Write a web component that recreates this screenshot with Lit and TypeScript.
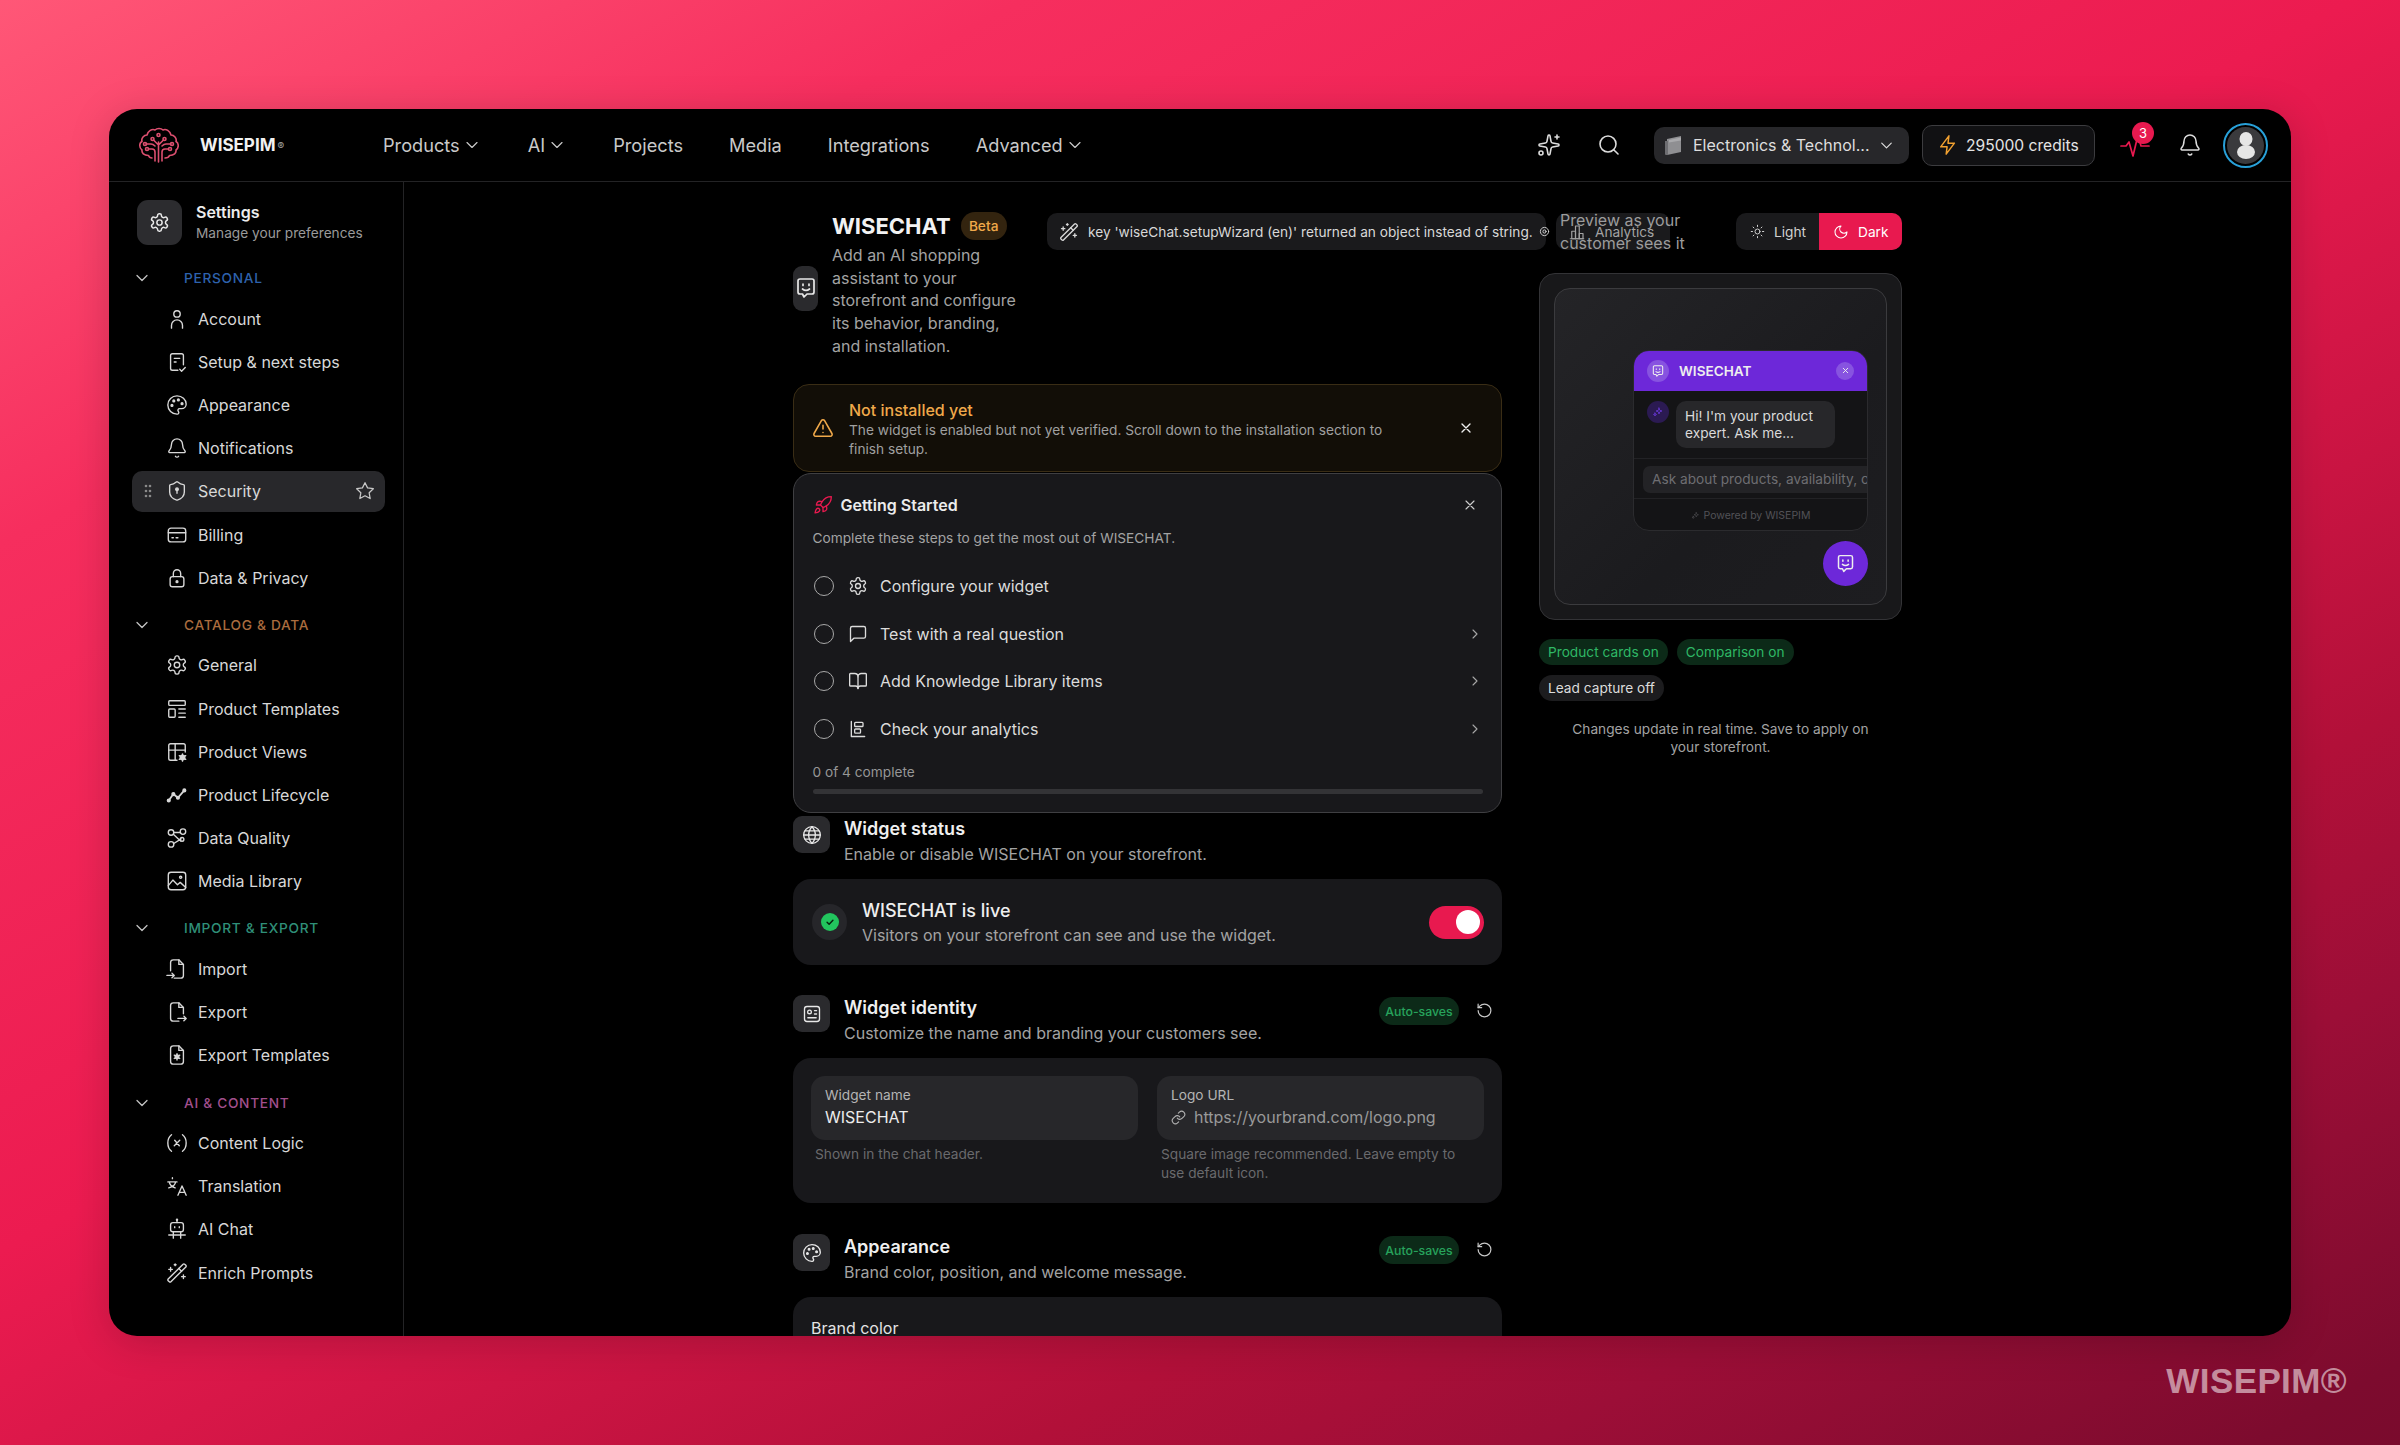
import { LitElement, html, css } from "lit";
import { customElement } from "lit/decorators.js";
import { unsafeSVG } from "lit/directives/unsafe-svg.js";

const SMILE = `<path d="M4 5a2 2 0 0 1 2-2h12a2 2 0 0 1 2 2v11a2 2 0 0 1-2 2h-5l-3 3-1.5-3H6a2 2 0 0 1-2-2z"/><path d="M9 8v1.5M15 8v1.5M8.5 13c2 1.6 5 1.6 7 0"/>`;
const I: Record<string, string> = {
  settings: `<path d="M12.22 2h-.44a2 2 0 0 0-2 2v.18a2 2 0 0 1-1 1.73l-.43.25a2 2 0 0 1-2 0l-.15-.08a2 2 0 0 0-2.73.73l-.22.38a2 2 0 0 0 .73 2.73l.15.1a2 2 0 0 1 1 1.72v.51a2 2 0 0 1-1 1.74l-.15.09a2 2 0 0 0-.73 2.73l.22.38a2 2 0 0 0 2.73.73l.15-.08a2 2 0 0 1 2 0l.43.25a2 2 0 0 1 1 1.73V20a2 2 0 0 0 2 2h.44a2 2 0 0 0 2-2v-.18a2 2 0 0 1 1-1.73l.43-.25a2 2 0 0 1 2 0l.15.08a2 2 0 0 0 2.73-.73l.22-.39a2 2 0 0 0-.73-2.73l-.15-.08a2 2 0 0 1-1-1.74v-.5a2 2 0 0 1 1-1.74l.15-.09a2 2 0 0 0 .73-2.73l-.22-.38a2 2 0 0 0-2.73-.73l-.15.08a2 2 0 0 1-2 0l-.43-.25a2 2 0 0 1-1-1.73V4a2 2 0 0 0-2-2z"/><circle cx="12" cy="12" r="3"/>`,
  user: `<circle cx="12" cy="6.5" r="3.5"/><path d="M6 22v-3a6 6 0 0 1 12 0v3"/>`,
  setup: `<path d="M13 21H7a2 2 0 0 1-2-2V5a2 2 0 0 1 2-2h10a2 2 0 0 1 2 2v10"/><path d="M9 8h6M9 12h2M15 20l2 2 4-4"/>`,
  palette: `<path d="M12 22a1 1 0 0 1 0-20 10 9 0 0 1 10 9 5 5 0 0 1-5 5h-2.25a1.75 1.75 0 0 0-1.4 2.8l.3.4a1.75 1.75 0 0 1-1.4 2.8z"/><circle cx="13.5" cy="6.5" r="1" fill="currentColor"/><circle cx="17.5" cy="10.5" r="1" fill="currentColor"/><circle cx="6.5" cy="12.5" r="1" fill="currentColor"/><circle cx="8.5" cy="7.5" r="1" fill="currentColor"/>`,
  bell: `<path d="M10.268 21a2 2 0 0 0 3.464 0"/><path d="M3.262 15.326A1 1 0 0 0 4 17h16a1 1 0 0 0 .74-1.673C19.41 13.956 18 12.499 18 8A6 6 0 0 0 6 8c0 4.499-1.411 5.956-2.738 7.326"/>`,
  shield: `<path d="M20 13c0 5-3.5 7.5-7.66 8.95a1 1 0 0 1-.67-.01C7.5 20.5 4 18 4 13V6a1 1 0 0 1 1-1c2 0 4.5-1.2 6.24-2.72a1.17 1.17 0 0 1 1.52 0C14.51 3.81 17 5 19 5a1 1 0 0 1 1 1z"/><circle cx="12" cy="10" r="1.4" fill="currentColor"/><path d="M12 11v3.5"/>`,
  star: `<path d="M12 2l3.09 6.26L22 9.27l-5 4.87 1.18 6.88L12 17.77l-6.18 3.25L7 14.14 2 9.27l6.91-1.01z"/>`,
  billing: `<rect x="2.5" y="4.5" width="19" height="15" rx="3"/><path d="M2.5 9.5h19M6.5 15h1.5M11 15h2"/>`,
  lock: `<rect x="4.5" y="10.5" width="15" height="11" rx="2.5"/><path d="M8 10.5V7a4 4 0 0 1 8 0v3.5"/><circle cx="12" cy="16" r="1" fill="currentColor"/>`,
  template: `<rect x="3" y="3" width="18" height="5" rx="1"/><rect x="3" y="12" width="7" height="9" rx="1"/><path d="M14 12h7M14 16.5h7M14 21h7"/>`,
  views: `<path d="M12 21H5a2 2 0 0 1-2-2V5a2 2 0 0 1 2-2h14a2 2 0 0 1 2 2v7"/><path d="M3 10h18M10 3v18"/><circle cx="18" cy="18" r="2.5" fill="currentColor"/><path d="M18 14v1.5M18 20.500v1.500M14.500 16l1.300.8M20.200 19.200l1.300.8M14.500 20l1.300-.8M20.200 16.800l1.300-.8"/>`,
  life: `<path d="M3 18l5-7 5 4 7-8" stroke-width="2"/><circle cx="3" cy="18" r="1.500" fill="currentColor"/><circle cx="8" cy="11" r="1.500" fill="currentColor"/><circle cx="13" cy="15" r="1.500" fill="currentColor"/><circle cx="20" cy="7" r="1.500" fill="currentColor"/>`,
  quality: `<circle cx="5.500" cy="6" r="3"/><circle cx="18.500" cy="5" r="3"/><circle cx="5.500" cy="19" r="3"/><path d="M8 8l7 6.500a2 2 0 0 1 1 .5M8.500 18l8-5M8.500 6h7"/><circle cx="17.500" cy="13.500" r="2"/>`,
  image: `<rect x="2.500" y="2.500" width="19" height="19" rx="3"/><path d="M2.500 17l5-6 5 5 3-2.500 6 5.500"/><circle cx="16" cy="8" r="1.200"/>`,
  import: `<path d="M14 2v5h5"/><path d="M5 14V5a3 3 0 0 1 3-3h6l5 5v12a3 3 0 0 1-3 3H9"/><path d="M1 19h8M6.500 16.500L9 19l-2.500 2.500"/>`,
  export: `<path d="M14 2v5h5"/><path d="M14 22H8a3 3 0 0 1-3-3V5a3 3 0 0 1 3-3h6l5 5v7"/><path d="M13 19h9M19.500 16.500L22 19l-2.500 2.500"/>`,
  exportt: `<path d="M14 2v5h5"/><path d="M16 22H8a3 3 0 0 1-3-3V5a3 3 0 0 1 3-3h6l5 5v12a3 3 0 0 1-3 3z"/><circle cx="12" cy="14" r="2" fill="currentColor"/><path d="M12 10.500v7M9 12.200l6 3.600M9 15.800l6-3.600"/>`,
  variable: `<path d="M6 21s-4-3-4-9 4-9 4-9"/><path d="M18 3s4 3 4 9-4 9-4 9"/><path d="M15 9l-6 6M9.500 9l5 6"/>`,
  translate: `<path d="M2 7.500h10M7 3v1M3.500 7.500c.5 3 3 5.500 6.500 6.500M10.500 7.500c-.5 3-3 5.500-7.500 6.500"/><path d="M22 22l-4.500-10L13 22M14.500 19h6"/>`,
  robot: `<rect x="5" y="5" width="14" height="10" rx="2.500"/><path d="M12 5V2.500M9.500 9.500v1M14.500 9.500v1M3 18.500h18M8 15v7M16 15v7"/><circle cx="12" cy="2" r=".6"/>`,
  wand: `<path d="m21.640 3.640-1.280-1.280a1.210 1.210 0 0 0-1.720 0L2.360 18.640a1.210 1.210 0 0 0 0 1.720l1.280 1.280a1.200 1.200 0 0 0 1.720 0L21.640 5.360a1.200 1.200 0 0 0 0-1.720"/><path d="m14 7 3 3M5 6v4M19 14v4M10 2v2M7 8H3M21 16h-4M11 3H9"/>`,
  chevDown: `<path d="m6 9 6 6 6-6"/>`,
  chevRight: `<path d="m9 6 6 6-6 6"/>`,
  sparkle: `<path d="M11.017 2.814a1 1 0 0 1 1.966 0l1.051 5.558a2 2 0 0 0 1.594 1.594l5.558 1.051a1 1 0 0 1 0 1.966l-5.558 1.051a2 2 0 0 0-1.594 1.594l-1.051 5.558a1 1 0 0 1-1.966 0l-1.051-5.558a2 2 0 0 0-1.594-1.594l-5.558-1.051a1 1 0 0 1 0-1.966l5.558-1.051a2 2 0 0 0 1.594-1.594z"/><path d="M20 2v4M22 4h-4"/><circle cx="4" cy="20" r="2"/>`,
  search: `<circle cx="11" cy="11" r="8"/><path d="m21 21-4.300-4.300"/>`,
  zap: `<path d="M13 2L4 14h7l-1 8 9-12h-7z"/>`,
  smile: SMILE,
  x: `<path d="M18 6 6 18M6 6l12 12"/>`,
  alert: `<path d="m21.730 18-8-14a2 2 0 0 0-3.480 0l-8 14A2 2 0 0 0 4 21h16a2 2 0 0 0 1.730-3"/><path d="M12 9v4M12 17h.01"/>`,
  rocket: `<path d="M4.500 16.500c-1.500 1.260-2 5-2 5s3.740-.5 5-2c.71-.84.7-2.130-.09-2.910a2.180 2.180 0 0 0-2.910-.09z"/><path d="m12 15-3-3a22 22 0 0 1 2-3.950A12.880 12.880 0 0 1 22 2c0 2.720-.78 7.500-6 11a22.350 22.350 0 0 1-4 2z"/><path d="M9 12H4s.55-3.030 2-4c1.620-1.080 5 0 5 0M12 15v5s3.030-.55 4-2c1.080-1.620 0-5 0-5"/>`,
  msg: `<path d="M21 15a2 2 0 0 1-2 2H7l-4 4V5a2 2 0 0 1 2-2h14a2 2 0 0 1 2 2z"/>`,
  book: `<path d="M12 7v14"/><path d="M3 18a1 1 0 0 1-1-1V4a1 1 0 0 1 1-1h5a4 4 0 0 1 4 4 4 4 0 0 1 4-4h5a1 1 0 0 1 1 1v13a1 1 0 0 1-1 1h-6a3 3 0 0 0-3 3 3 3 0 0 0-3-3z"/>`,
  chart: `<path d="M4 3v18h16"/><rect x="8" y="4" width="10" height="5" rx="1"/><rect x="8" y="12" width="7" height="5" rx="1"/>`,
  globe: `<circle cx="12" cy="12" r="10"/><path d="M12 2a14.500 14.500 0 0 0 0 20 14.500 14.500 0 0 0 0-20M2 12h20M3.500 7h17M3.500 17h17"/>`,
  idcard: `<rect x="3" y="3" width="18" height="18" rx="3"/><circle cx="9" cy="9.500" r="2.200"/><path d="M15 8h2.500M15 12h2.500M7 16.500h10"/>`,
  reset: `<path d="M3 12a9 9 0 1 0 9-9 9.750 9.750 0 0 0-6.740 2.740L3 8"/><path d="M3 3v5h5"/>`,
  link: `<path d="M10 13a5 5 0 0 0 7.540.54l3-3a5 5 0 0 0-7.070-7.070l-1.720 1.710"/><path d="M14 11a5 5 0 0 0-7.540-.54l-3 3a5 5 0 0 0 7.070 7.070l1.710-1.710"/>`,
  sun: `<circle cx="12" cy="12" r="4"/><path d="M12 2v2M12 20v2M4.900 4.900l1.400 1.400M17.700 17.700l1.400 1.400M2 12h2M20 12h2M6.300 17.700l-1.400 1.400M19.100 4.900l-1.400 1.400"/>`,
  moon: `<path d="M12 3a6 6 0 0 0 9 9 9 9 0 1 1-9-9Z"/>`,
  bars: `<path d="M3 21h18"/><rect x="5" y="11" width="5" height="10"/><rect x="10" y="4" width="5" height="17"/><rect x="15" y="14" width="5" height="7"/>`,
  target: `<circle cx="12" cy="12" r="9"/><circle cx="12" cy="12" r="3.500"/>`,
  check: `<path d="M7 12.500l3.500 3.500L17 9"/>`,
  spark4: `<path d="M14 4l1.500 4.500L20 10l-4.500 1.500L14 16l-1.500-4.500L8 10l4.500-1.500zM6 14l.8 2.200L9 17l-2.200.8L6 20l-.8-2.200L3 17l2.200-.8z"/>`,
};

function ic(name: string, size = 20, w = 1.6, cls = "") {
  return html`<svg class="ic ${cls}" width=${size} height=${size} viewBox="0 0 24 24" fill="none" stroke="currentColor" stroke-width=${w} stroke-linecap="round" stroke-linejoin="round">${unsafeSVG(I[name])}</svg>`;
}

const SECTIONS = [
  { label: "PERSONAL", cls: "blue", items: [["user", "Account"], ["setup", "Setup & next steps"], ["palette", "Appearance"], ["bell", "Notifications"], ["shield", "Security"], ["billing", "Billing"], ["lock", "Data & Privacy"]] },
  { label: "CATALOG & DATA", cls: "orange", items: [["settings", "General"], ["template", "Product Templates"], ["views", "Product Views"], ["life", "Product Lifecycle"], ["quality", "Data Quality"], ["image", "Media Library"]] },
  { label: "IMPORT & EXPORT", cls: "teal", items: [["import", "Import"], ["export", "Export"], ["exportt", "Export Templates"]] },
  { label: "AI & CONTENT", cls: "pink", items: [["variable", "Content Logic"], ["translate", "Translation"], ["robot", "AI Chat"], ["wand", "Enrich Prompts"]] },
];

const STEPS: [string, string, boolean][] = [
  ["settings", "Configure your widget", false],
  ["msg", "Test with a real question", true],
  ["book", "Add Knowledge Library items", true],
  ["chart", "Check your analytics", true],
];

@customElement("app-root")
export class AppRoot extends LitElement {
  static styles = css`
    :host {
      display: block; position: relative; box-sizing: border-box; width: 2400px; height: 1445px; padding: 109px;
      background: linear-gradient(152deg, #ff5777 0%, #f62e5e 20%, #ec1b50 46%, #c91442 63%, #b21039 73%, #9c0e37 83%, #7d0b2e 97%, #7a0b2d 100%);
      font-family: Inter, "Noto Sans", sans-serif; color: #e5e5e5; overflow: hidden;
    }
    * { box-sizing: border-box; }
    .ic { flex: none; display: block; }
    .window { height: 1227px; background: #000; border-radius: 28px; overflow: hidden; display: flex; flex-direction: column; box-shadow: 0 6px 40px rgba(0,0,0,.18); }
    .mark { position: absolute; right: 53px; bottom: 45px; font-family: "Liberation Sans", Arial, sans-serif; font-size: 35px; font-weight: 700; letter-spacing: .4px; color: rgba(255,255,255,.55); line-height: 38px; }

    header { flex: none; height: 73px; display: flex; align-items: center; padding: 0 23px 0 29px; border-bottom: 1px solid #232325; }
    .brand { width: 245px; display: flex; align-items: center; gap: 21px; }
    .brand svg { display: block; }
    .brand b { font-size: 17px; font-weight: 700; color: #f1f1f1; }
    .brand sup { font-size: 10px; color: #a8a8a8; font-weight: 400; margin-left: 2px; vertical-align: 1px; line-height: 0; }
    nav { display: flex; gap: 46px; font-size: 18.200px; color: #c9c9c9; }
    nav span { display: flex; align-items: center; gap: 2px; }
    .right { margin-left: auto; display: flex; align-items: center; color: #dcdcdc; }
    .sel { width: 255px; height: 37px; margin: 0 13px 0 33px; border-radius: 10px; background: #27272a; display: flex; align-items: center; padding: 0 13px 0 10px; font-size: 16px; color: #dedede; }
    .sel span { margin-left: 9px; flex: 1; white-space: nowrap; }
    .credits { width: 173px; height: 41px; border-radius: 10px; background: #111113; border: 1px solid #3c3c3f; display: flex; align-items: center; padding-left: 14px; gap: 7px; font-size: 15.600px; font-weight: 400; color: #e4e4e4; white-space: nowrap; }
    .pulse { position: relative; margin: 0 28px 0 25px; color: #e8194f; }
    .badge { position: absolute; left: 12px; top: -11px; width: 22px; height: 22px; border-radius: 50%; background: #e8194f; color: #fff; font-size: 13px; display: flex; align-items: center; justify-content: center; }
    .avatar { margin-left: 21px; width: 45px; height: 45px; border-radius: 50%; border: 2px solid #28a0d8; padding: 2px; }
    .avatar div { width: 100%; height: 100%; border-radius: 50%; background: #3a3a3d; display: flex; align-items: center; justify-content: center; }

    .body { flex: 1; min-height: 0; display: flex; }
    aside { flex: none; width: 295px; border-right: 1px solid #232325; padding: 18px 18px 0 23px; overflow: hidden; }
    .shead { display: flex; align-items: center; gap: 14px; margin: 0 0 16px 5px; }
    .sbox { width: 45px; height: 45px; border-radius: 11px; background: #2c2c2f; display: flex; align-items: center; justify-content: center; color: #e8e8e8; }
    .shead b { display: block; font-size: 16px; font-weight: 600; color: #ededed; line-height: 21px; margin-top: 1px; }
    .shead small { display: block; font-size: 13.700px; color: #9a9a9a; line-height: 21px; }
    .sec { margin-bottom: 9.500px; }
    .slabel { height: 34px; margin-bottom: 3px; display: flex; align-items: center; font-size: 13.700px; font-weight: 500; letter-spacing: .7px; color: #c4c4c4; }
    .slabel span { margin-left: 32px; }
    .blue span { color: #2e62ad; } .orange span { color: #aa6c3e; } .teal span { color: #2f8f78; } .pink span { color: #a24f8d; }
    .rows { display: flex; flex-direction: column; gap: 2px; }
    .row { height: 41.200px; border-radius: 10px; display: flex; align-items: center; gap: 10px; padding-left: 34px; font-size: 16px; color: #d8d8d8; position: relative; }
    .row.on { background: #28282b; }
    .row .grip { position: absolute; left: 10px; color: #8a8a8a; }
    .row .st { position: absolute; right: 10px; color: #c8c8c8; }

    main { flex: 1; min-width: 0; overflow: hidden; display: flex; justify-content: center; padding-top: 31px; }
    .grid { width: 1109px; display: grid; grid-template-columns: 709px 37px 363px; grid-template-rows: 37px auto; row-gap: 23px; align-items: start; }
    .tools { grid-column: 1 / -1; grid-row: 1; justify-self: end; display: flex; z-index: 1; }
    .pill { height: 37px; border-radius: 10px; background: #1a1a1c; display: flex; align-items: center; font-size: 13.700px; white-space: nowrap; color: #d8d8d8; }
    .key { width: 499px; padding-left: 12px; gap: 9px; }
    .key .ic:last-child { margin-left: -3px; }
    .ana { position: relative; width: 114px; margin: 0 66px 0 10px; padding-left: 12px; gap: 9px; color: #a3a3a3; }
    .prev { position: absolute; left: 4px; top: -4.500px; font-size: 16px; line-height: 23px; color: #9c9c9c; white-space: nowrap; }
    .theme { display: flex; height: 37px; border-radius: 10px; overflow: hidden; background: #1a1a1c; font-size: 13.700px; color: #d0d0d0; }
    .theme span { display: flex; align-items: center; gap: 9px; padding: 0 14px 0 14px; }
    .theme .lt { width: 83px; }
    .theme .dk { width: 83px; background: #e8194f; color: #fff; }

    .left { grid-column: 1; grid-row: 1 / span 2; margin-top: -2px; }
    .phead { display: flex; align-items: center; gap: 14px; }
    .pbox { width: 25px; height: 45px; border-radius: 9px; background: #2a2a2d; display: flex; align-items: center; justify-content: center; color: #e8e8e8; flex: none; margin-top: 8px; }
    .ptitle { display: flex; align-items: center; gap: 10px; height: 30px; margin-top: 0; }
    .ptitle b { font-size: 22px; font-weight: 700; color: #f2f2f2; }
    .ptitle span { height: 28px; width: 46px; border-radius: 14px; background: #33240f; color: #f0a94a; font-size: 13.700px; font-weight: 500; display: flex; align-items: center; justify-content: center; }
    .pdesc { width: 185px; font-size: 16px; line-height: 22.700px; color: #a3a3a3; margin-top: 3px; }

    .warn { margin-top: 26px; height: 88px; border-radius: 16px; border: 1px solid #3a2d15; background: #120e07; display: flex; align-items: center; padding: 0 0 0 18px; position: relative; }
    .warn .tri { color: #f0a94a; }
    .warn .txt { margin-left: 15px; width: 560px; padding-top: 2px; }
    .warn b { display: block; font-size: 16px; font-weight: 500; color: #f0a94a; line-height: 22px; }
    .warn p { margin: 0; font-size: 13.700px; line-height: 19px; color: #a0a0a0; }
    .warn .close { margin-left: auto; margin-right: 27px; color: #eee; }

    .gs { margin-top: 1px; height: 340px; border-radius: 18px; border: 1px solid #3f3f42; background: #18181b; padding: 19px 18px 0 18.500px; }
    .gs-h { display: flex; align-items: center; gap: 8px; height: 24px; font-size: 16px; font-weight: 600; color: #ececec; }
    .gs-h .rk { color: #e8194f; }
    .gs-h .close { margin-left: auto; color: #cfcfcf; margin-right: 5px; }
    .gs-d { margin-top: 11px; font-size: 13.700px; line-height: 20px; color: #a3a3a3; }
    .steps { margin-top: 15px; }
    .step { height: 47.500px; display: flex; align-items: center; font-size: 16px; color: #dcdcdc; }
    .radio { width: 20px; height: 20px; border-radius: 50%; border: 1.500px solid #a8a8a8; margin: 0 14.500px 0 1px; }
    .step .t { margin-left: 12px; flex: 1; }
    .step .chev { color: #a8a8a8; margin-right: 0; }
    .gs-c { margin-top: 9px; font-size: 13.700px; line-height: 20px; color: #969696; }
    .bar { margin-top: 7px; height: 5px; border-radius: 3px; background: #333336; }

    .sh { display: flex; align-items: flex-start; gap: 14px; }
    .sbx { width: 37px; height: 37px; border-radius: 9px; background: #2a2a2d; display: flex; align-items: center; justify-content: center; color: #e8e8e8; flex: none; }
    .sh-t { flex: 1; }
    .sh-t b { display: block; font-size: 18px; font-weight: 600; line-height: 27px; color: #efefef; margin-top: -1px; }
    .sh-t p { margin: 0; font-size: 16px; line-height: 24px; color: #a3a3a3; }
    .first { margin-top: 3.500px; }
    .card { margin-top: 13px; border-radius: 18px; background: #18181b; }
    .next { margin-top: 30px; }
    .next2 { margin-top: 31px; }
    .live { height: 86px; display: flex; align-items: center; padding: 0 18px 0 19px; }
    .dotw { width: 35px; height: 36px; border-radius: 50%; background: #26262a; display: flex; align-items: center; justify-content: center; }
    .dot { width: 18px; height: 18px; border-radius: 50%; background: #22c55e; color: #06240f; display: flex; align-items: center; justify-content: center; }
    .live-t { margin-left: 15px; flex: 1; padding-top: 1px; }
    .live-t b { display: block; font-size: 18px; font-weight: 500; line-height: 25px; color: #efefef; }
    .live-t p { margin: 0; font-size: 16px; line-height: 24px; color: #a3a3a3; }
    .tog { width: 55px; height: 33px; border-radius: 17px; background: #e8194f; display: flex; align-items: center; justify-content: flex-end; padding-right: 4px; }
    .tog i { width: 24px; height: 24px; border-radius: 50%; background: #fff; }
    .auto { height: 28px; width: 80px; border-radius: 14px; background: #0c2a18; color: #27a35c; font-size: 12.300px; font-weight: 500; display: flex; align-items: center; justify-content: center; margin-top: 2px; }
    .rst { margin: 7px 9px 0 3px; color: #c8c8c8; }
    .idc { height: 145px; padding: 18px 18px 0; display: grid; grid-template-columns: 1fr 1fr; column-gap: 19px; align-items: start; }
    .inp { height: 64px; border-radius: 14px; background: #27272a; padding: 10px 14px; }
    .inp label { display: block; font-size: 13.700px; line-height: 18px; color: #b4b4b4; }
    .inp div { display: flex; align-items: center; gap: 8px; font-size: 16px; line-height: 26px; color: #ececec; }
    .inp .ph { color: #999; }
    .inp .ph .ic { color: #b4b4b4; }
    .help { margin: 5px 4px 0; font-size: 13.700px; line-height: 19px; color: #6a6a6d; }
    .apc { height: 120px; padding: 19.500px 18px; font-size: 16px; line-height: 22px; color: #e4e4e4; }

    .rightc { grid-column: 3; grid-row: 2; }
    .pv { height: 347px; border-radius: 16px; border: 1px solid #333336; background: #18181a; padding: 14px; }
    .pvi { height: 100%; border-radius: 16px; border: 1px solid #3b3b3e; background: linear-gradient(135deg, #242427, #1b1b1e 60%, #1d1d20); padding: 61px 18px 0 0; display: flex; flex-direction: column; align-items: flex-end; }
    .chat { width: 235px; height: 181px; border-radius: 16px; border: 1px solid #2b2b2e; background: #141416; overflow: hidden; }
    .ch { height: 41px; margin: -1px -1px 0; background: #6d28d9; display: flex; align-items: center; padding: 0 14px; color: #eee; font-size: 13.600px; font-weight: 600; }
    .ch .c1 { width: 22px; height: 22px; border-radius: 50%; background: #8753e0; display: flex; align-items: center; justify-content: center; margin-right: 10px; }
    .ch .c2 { width: 18px; height: 18px; border-radius: 50%; background: #8753e0; display: flex; align-items: center; justify-content: center; margin-left: auto; }
    .cb { height: 68px; padding: 10px 13px 0; display: flex; gap: 7px; border-bottom: 1px solid #222225; }
    .cav { width: 22px; height: 22px; border-radius: 50%; background: #2b1a52; color: #6d3be0; display: flex; align-items: center; justify-content: center; flex: none; }
    .bub { width: 159px; height: 47px; border-radius: 10px; background: #27272a; padding: 7px 9px; font-size: 13.700px; line-height: 17px; color: #dadada; }
    .ci { height: 40px; padding: 7px 0 0 9px; border-bottom: 1px solid #222225; }
    .ci div { height: 27px; width: 240px; border-radius: 7px; background: #232326; padding-left: 9px; font-size: 13.700px; line-height: 27px; color: #6e6e72; white-space: nowrap; overflow: hidden; }
    .cf { display: flex; align-items: center; justify-content: center; gap: 4px; height: 32px; padding-top: 1px; font-size: 10.500px; color: #525256; white-space: nowrap; }
    .fab { margin-top: 10px; width: 45px; height: 45px; border-radius: 50%; background: #6d28d9; color: #eee; display: flex; align-items: center; justify-content: center; }
    .chips { margin-top: 19px; display: flex; flex-wrap: wrap; gap: 10px 9px; }
    .chip { height: 26px; border-radius: 13px; padding: 0 9px; font-size: 13.700px; line-height: 26px; background: #1c1c1e; color: #dcdcdc; }
    .chip.g { background: #0c2a18; color: #2fb866; }
    .note { margin: 19px auto 0; width: 320px; text-align: center; font-size: 13.700px; line-height: 18px; color: #a3a3a3; }
  `;

  renderLogo() {
    return html`<svg width="41" height="36" viewBox="0 0 41 36" fill="none" stroke="#dc4f6f" stroke-width="1.600" stroke-linecap="round" stroke-linejoin="round">
      <path d="M14 31c-2 0-3-1-3.500-2.500C6 28.500 3.500 26 4 23 1 21 1 16 4 14.500 3 11 6 8 9 8c1-4 5-6.500 8-5 2-2 6-2 8 0 3-1.500 7 1 8 5 3 0 6 3 5 6.500 3 1.500 3 6.500 0 8.500.5 3-2 5.500-6.500 5.500C31 30 30 31 27 31"/>
      <path d="M20.500 35V15M17 34V25c0-2-1-3-3-3h-3M24 34V25c0-2 1-3 3-3h3M20.500 18l-5-5M20.500 18l5-5M8 17h5c2 0 3 1 4 2M33 17h-5c-2 0-3 1-4 2"/>
      <circle cx="14.500" cy="12" r="1.500"/><circle cx="26.500" cy="12" r="1.500"/><circle cx="20.500" cy="8" r="1.500"/><circle cx="9" cy="22" r="1.500"/><circle cx="32" cy="22" r="1.500"/><circle cx="7" cy="17" r="1.500"/><circle cx="34" cy="17" r="1.500"/>
    </svg>`;
  }

  renderHeader() {
    return html`<header>
      <div class="brand">${this.renderLogo()}<b>WISEPIM<sup>®</sup></b></div>
      <nav>
        <span>Products ${ic("chevDown", 20, 1.4)}</span>
        <span>AI ${ic("chevDown", 20, 1.4)}</span>
        <span>Projects</span><span>Media</span><span>Integrations</span>
        <span>Advanced ${ic("chevDown", 20, 1.4)}</span>
      </nav>
      <div class="right">
        ${ic("sparkle", 24, 1.6)}
        <span style="width:36px"></span>
        ${ic("search", 24, 1.6)}
        <div class="sel">
          <svg width="20" height="24" viewBox="0 0 20 24" class="ic"><path d="M3 6l14-3v16L3 22z" fill="#8f8f92"/><path d="M1 8h3v14H2a1 1 0 0 1-1-1z" fill="#6e6e72"/><path d="M5 7l12-2.500v3L5 9.500z" fill="#a9a9ac"/></svg>
          <span>Electronics &amp; Technol...</span>${ic("chevDown", 19, 1.5)}
        </div>
        <div class="credits"><span style="color:#f0a030">${ic("zap", 22, 1.6)}</span>295000 credits</div>
        <div class="pulse">
          <svg class="ic" width="30" height="24" viewBox="0 0 30 24" fill="none" stroke="currentColor" stroke-width="1.700" stroke-linejoin="round" stroke-linecap="round"><path d="M1 13h5l3-4 4 14 5-21 3 11h8"/></svg>
          <div class="badge">3</div>
        </div>
        ${ic("bell", 24, 1.500)}
        <div class="avatar"><div>
          <svg width="24" height="30" viewBox="0 0 24 30" class="ic"><ellipse cx="12" cy="9" rx="6.500" ry="7" fill="#e6e6e6"/><ellipse cx="12" cy="22" rx="9" ry="7" fill="#e6e6e6"/></svg>
        </div></div>
      </div>
    </header>`;
  }

  renderSidebar() {
    return html`<aside>
      <div class="shead">
        <div class="sbox">${ic("settings", 21, 1.7)}</div>
        <div><b>Settings</b><small>Manage your preferences</small></div>
      </div>
      ${SECTIONS.map(s => html`<div class="sec">
        <div class="slabel ${s.cls}">${ic("chevDown", 20, 1.5)}<span>${s.label}</span></div>
        <div class="rows">
          ${s.items.map(([i, t]) => {
            const on = t === "Security";
            return html`<div class="row ${on ? "on" : ""}">
              ${on ? html`<svg class="grip ic" width="12" height="16" viewBox="0 0 12 16" fill="currentColor"><circle cx="4" cy="3" r="1.300"/><circle cx="8" cy="3" r="1.300"/><circle cx="4" cy="8" r="1.300"/><circle cx="8" cy="8" r="1.300"/><circle cx="4" cy="13" r="1.300"/><circle cx="8" cy="13" r="1.300"/></svg>` : ""}
              ${ic(i, 22, 1.5)}<span>${t}</span>
              ${on ? html`<span class="st">${ic("star", 20, 1.5)}</span>` : ""}
            </div>`;
          })}
        </div>
      </div>`)}
    </aside>`;
  }

  renderSectionHead(icon: string, title: string, desc: string, auto: boolean) {
    return html`<div class="sh">
      <div class="sbx">${ic(icon, 20, 1.6)}</div>
      <div class="sh-t"><b>${title}</b><p>${desc}</p></div>
      ${auto ? html`<div class="auto">Auto-saves</div><span class="rst">${ic("reset", 17, 1.7)}</span>` : ""}
    </div>`;
  }

  renderLeft() {
    return html`<div class="left">
      <div class="phead">
        <div class="pbox">${ic("smile", 24, 1.7)}</div>
        <div>
          <div class="ptitle"><b>WISECHAT</b><span>Beta</span></div>
          <div class="pdesc">Add an AI shopping assistant to your storefront and configure its behavior, branding, and installation.</div>
        </div>
      </div>
      <div class="warn">
        <span class="tri">${ic("alert", 22, 1.7)}</span>
        <div class="txt"><b>Not installed yet</b><p>The widget is enabled but not yet verified. Scroll down to the installation section to finish setup.</p></div>
        <span class="close">${ic("x", 16, 2)}</span>
      </div>
      <div class="gs">
        <div class="gs-h"><span class="rk">${ic("rocket", 20, 1.6)}</span>Getting Started<span class="close">${ic("x", 16, 1.7)}</span></div>
        <div class="gs-d">Complete these steps to get the most out of WISECHAT.</div>
        <div class="steps">
          ${STEPS.map(([i, t, c]) => html`<div class="step"><span class="radio"></span>${ic(i, 20, 1.6)}<span class="t">${t}</span>${c ? html`<span class="chev">${ic("chevRight", 16, 1.6)}</span>` : ""}</div>`)}
        </div>
        <div class="gs-c">0 of 4 complete</div>
        <div class="bar"></div>
      </div>
      <div class="first">${this.renderSectionHead("globe", "Widget status", "Enable or disable WISECHAT on your storefront.", false)}</div>
      <div class="card live">
        <div class="dotw"><div class="dot">${ic("check", 14, 2.5)}</div></div>
        <div class="live-t"><b>WISECHAT is live</b><p>Visitors on your storefront can see and use the widget.</p></div>
        <div class="tog"><i></i></div>
      </div>
      <div class="next">${this.renderSectionHead("idcard", "Widget identity", "Customize the name and branding your customers see.", true)}</div>
      <div class="card idc">
        <div><div class="inp"><label>Widget name</label><div>WISECHAT</div></div><p class="help">Shown in the chat header.</p></div>
        <div><div class="inp"><label>Logo URL</label><div class="ph">${ic("link", 15, 1.7)}https://yourbrand.com/logo.png</div></div><p class="help">Square image recommended. Leave empty to use default icon.</p></div>
      </div>
      <div class="next2">${this.renderSectionHead("palette", "Appearance", "Brand color, position, and welcome message.", true)}</div>
      <div class="card apc">Brand color</div>
    </div>`;
  }

  renderRight() {
    return html`<div class="rightc">
      <div class="pv"><div class="pvi">
        <div class="chat">
          <div class="ch"><span class="c1">${ic("smile", 14, 1.8)}</span>WISECHAT<span class="c2">${ic("x", 9, 2.5)}</span></div>
          <div class="cb"><span class="cav">${ic("spark4", 12, 1.5)}</span><div class="bub">Hi! I'm your product expert. Ask me...</div></div>
          <div class="ci"><div>Ask about products, availability, or specs</div></div>
          <div class="cf">${ic("spark4", 9, 1.5)}Powered by WISEPIM</div>
        </div>
        <div class="fab">${ic("smile", 21, 1.7)}</div>
      </div></div>
      <div class="chips">
        <span class="chip g">Product cards on</span><span class="chip g">Comparison on</span><span class="chip">Lead capture off</span>
      </div>
      <div class="note">Changes update in real time. Save to apply on your storefront.</div>
    </div>`;
  }

  render() {
    return html`<div class="window">
      ${this.renderHeader()}
      <div class="body">
        ${this.renderSidebar()}
        <main><div class="grid">
          <div class="tools">
            <div class="pill key">${ic("wand", 20, 1.6)}<span>key 'wiseChat.setupWizard (en)' returned an object instead of string.</span>${ic("target", 11, 2)}</div>
            <div class="pill ana">${ic("bars", 18, 1.6)}<span>Analytics</span><span class="prev">Preview as your<br />customer sees it</span></div>
            <div class="theme"><span class="lt">${ic("sun", 15, 1.6)}Light</span><span class="dk">${ic("moon", 16, 1.6)}Dark</span></div>
          </div>
          ${this.renderLeft()}
          ${this.renderRight()}
        </div></main>
      </div>
    </div>
    <div class="mark">WISEPIM®</div>`;
  }
}
